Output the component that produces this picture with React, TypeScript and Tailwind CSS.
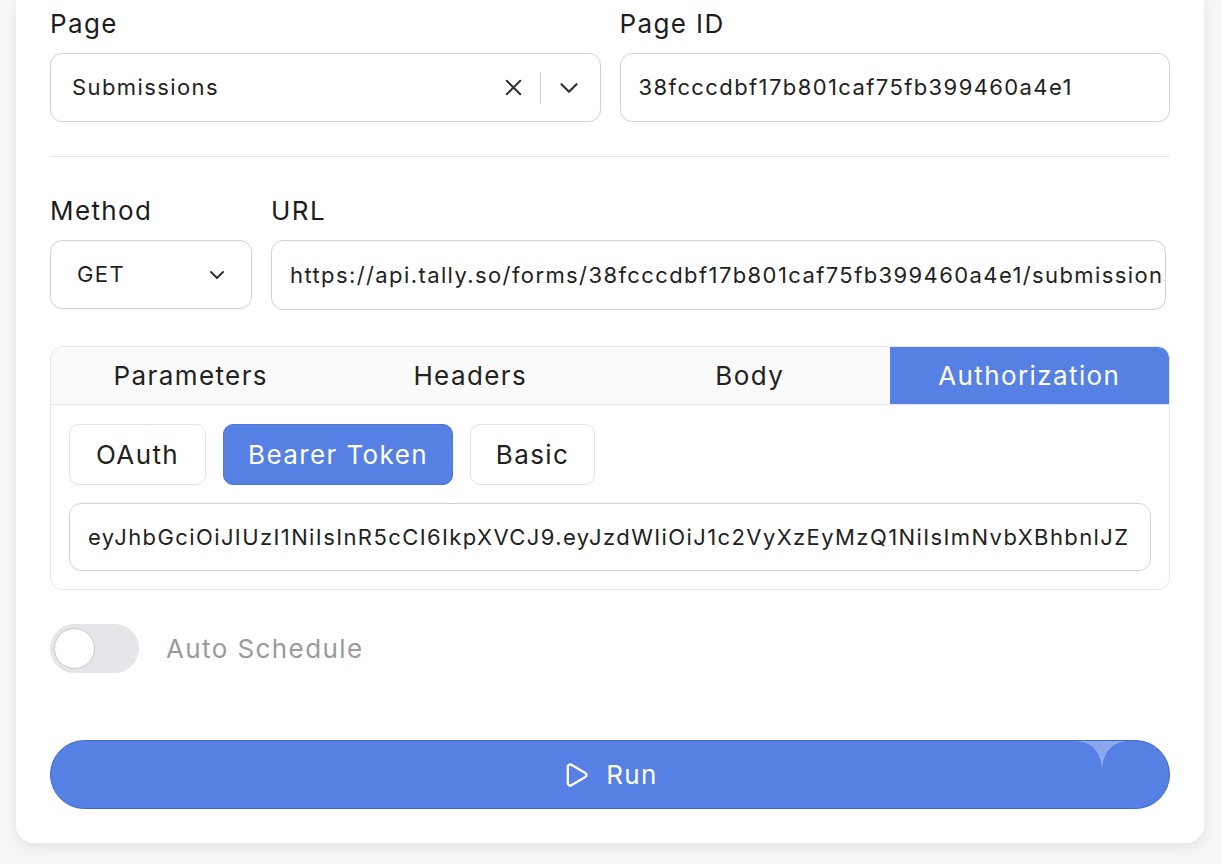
import { ChevronDown, Play, X } from "lucide-react";

const tabs = ["Parameters", "Headers", "Body", "Authorization"];
const authModes = [
  { label: "OAuth", width: "w-[137px]" },
  { label: "Bearer Token", width: "w-[230px]" },
  { label: "Basic", width: "w-[125px]" },
];

const activeTab = "Authorization";
const activeMode = "Bearer Token";

const token =
  "eyJhbGciOiJIUzI1NiIsInR5cCI6IkpXVCJ9.eyJzdWIiOiJ1c2VyXzEyMzQ1NiIsImNvbXBhbnlJZ";

function Label({ children }: { children: React.ReactNode }) {
  return <div className="text-[26px] leading-[34px] text-[#1d1d1f]">{children}</div>;
}

export default function App() {
  return (
    <div className="min-h-screen bg-[#f6f6f6] font-['Inter',sans-serif] tracking-[1.4px]">
      <div className="ml-4 w-[1188px] rounded-b-[18px] bg-white px-[34px] pb-[34px] pt-[7px] shadow-[0_4px_12px_rgba(0,0,0,0.08)]">
        {/* page picker */}
        <div className="grid grid-cols-2 gap-[19px]">
          <div>
            <Label>Page</Label>
            <div className="mt-[12px] flex h-[69px] items-center rounded-[12px] border border-[#d2d2d6] pl-[21px] pr-[16px]">
              <span className="flex-1 text-[22px] text-[#222]">Submissions</span>
              <X className="h-[27px] w-[27px] text-[#333]" strokeWidth={1.8} />
              <div className="mx-[13px] h-[32px] w-px bg-[#cfcfd3]" />
              <ChevronDown className="h-[30px] w-[30px] text-[#333]" strokeWidth={1.8} />
            </div>
          </div>
          <div>
            <Label>Page ID</Label>
            <div className="mt-[12px] flex h-[69px] items-center rounded-[12px] border border-[#d2d2d6] px-[18px]">
              <span className="text-[22px] text-[#222]">38fcccdbf17b801caf75fb399460a4e1</span>
            </div>
          </div>
        </div>

        <div className="mt-[34px] h-px bg-[#e6e6e8]" />

        {/* request line */}
        <div className="mt-[37px] flex gap-[19px]">
          <div className="w-[202px]">
            <Label>Method</Label>
            <div className="mt-[12px] flex h-[69px] items-center justify-between rounded-[12px] border border-[#d2d2d6] pl-[26px] pr-[22px]">
              <span className="text-[22px] text-[#222]">GET</span>
              <ChevronDown className="h-[24px] w-[24px] text-[#333]" strokeWidth={2} />
            </div>
          </div>
          <div className="w-[895px]">
            <Label>URL</Label>
            <div className="mt-[12px] flex h-[70px] items-center overflow-hidden rounded-[12px] border border-[#d2d2d6] pl-[18px]">
              <span className="whitespace-nowrap text-[22px] text-[#222]">
                https://api.tally.so/forms/38fcccdbf17b801caf75fb399460a4e1/submissions
              </span>
            </div>
          </div>
        </div>

        {/* request options */}
        <div className="mt-[36px] overflow-hidden rounded-[12px] border border-[#e6e6e8]">
          <div className="grid h-[58px] grid-cols-4 border-b border-[#e6e6e8] bg-[#fafafa]">
            {tabs.map((tab) => (
              <div
                key={tab}
                className={`flex items-center justify-center text-[26px] ${
                  tab === activeTab ? "rounded-tr-[10px] bg-[#5680e4] text-white" : "text-[#222]"
                }`}
              >
                {tab}
              </div>
            ))}
          </div>
          <div className="px-[18px] pb-[18px] pt-[19px]">
            <div className="flex gap-[17px]">
              {authModes.map((mode) => (
                <div
                  key={mode.label}
                  className={`flex h-[61px] items-center justify-center rounded-[10px] border text-[26px] ${mode.width} ${
                    mode.label === activeMode
                      ? "border-[#4c76dc] bg-[#5680e4] text-white"
                      : "border-[#e2e2e5] bg-white text-[#222]"
                  }`}
                >
                  {mode.label}
                </div>
              ))}
            </div>
            <div className="mt-[18px] flex h-[68px] items-center overflow-hidden rounded-[12px] border border-[#d2d2d6] px-[18px]">
              <span className="whitespace-nowrap text-[22px] text-[#222]">{token}</span>
            </div>
          </div>
        </div>

        {/* schedule toggle */}
        <div className="mt-[34px] flex items-center gap-[27px]">
          <div className="flex h-[49px] w-[89px] items-center rounded-full bg-[#e6e6ea] px-[4px]">
            <div className="h-[41px] w-[41px] rounded-full border border-[#c8c8cc] bg-white" />
          </div>
          <span className="text-[26px] text-[#9a9a9e]">Auto Schedule</span>
        </div>

        {/* run */}
        <button className="relative mt-[67px] flex h-[69px] w-full items-center justify-center gap-[16px] overflow-hidden rounded-full border border-[#3f66c9] bg-[#5680e4] text-white">
          <Play className="h-[28px] w-[28px]" strokeWidth={2} />
          <span className="text-[26px]">Run</span>
          <svg
            className="absolute left-[1026px] top-[-28px] h-[56px] w-[50px]"
            viewBox="0 0 50 56"
            fill="#8aa7ef"
          >
            <path d="M25 0 C26.5 16 33 26 50 28 C33 30 26.5 40 25 56 C23.5 40 17 30 0 28 C17 26 23.5 16 25 0Z" />
          </svg>
        </button>
      </div>
    </div>
  );
}
